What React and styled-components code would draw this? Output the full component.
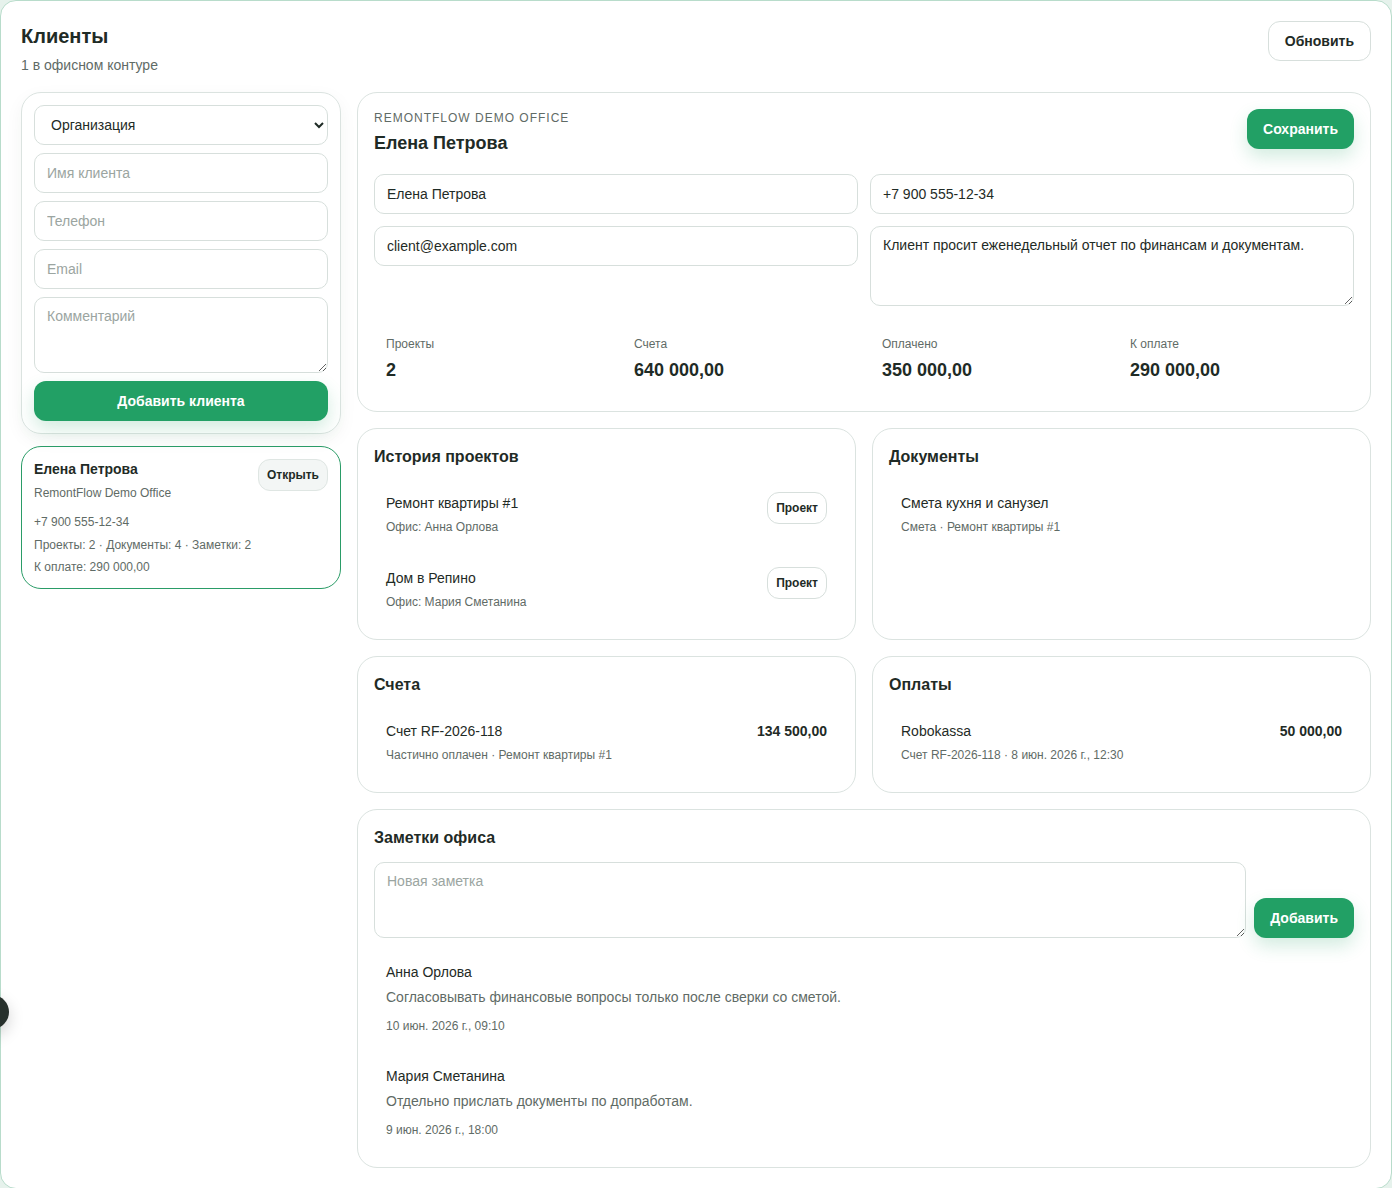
import React from "react";
import styled, { createGlobalStyle } from "styled-components";

const GlobalStyle = createGlobalStyle`
  * { box-sizing: border-box; }
  body {
    margin: 0;
    background: #e6f2ec;
    font-family: "Liberation Sans", Arial, sans-serif;
    color: #1f2b26;
  }
`;

const projects = [
  { title: "Ремонт квартиры #1", sub: "Офис: Анна Орлова" },
  { title: "Дом в Репино", sub: "Офис: Мария Сметанина" },
];

const notes = [
  {
    author: "Анна Орлова",
    text: "Согласовывать финансовые вопросы только после сверки со сметой.",
    date: "10 июн. 2026 г., 09:10",
  },
  {
    author: "Мария Сметанина",
    text: "Отдельно прислать документы по допработам.",
    date: "9 июн. 2026 г., 18:00",
  },
];

const stats = [
  { label: "Проекты", value: "2" },
  { label: "Счета", value: "640 000,00" },
  { label: "Оплачено", value: "350 000,00" },
  { label: "К оплате", value: "290 000,00" },
];

const App = () => {
  return (
    <>
      <GlobalStyle />
      <Panel>
        <Header>
          <div>
            <PageTitle>Клиенты</PageTitle>
            <PageSub>1 в офисном контуре</PageSub>
          </div>
          <GhostButton>Обновить</GhostButton>
        </Header>

        <Layout>
          <Sidebar>
            <FormCard>
              <Select defaultValue="org">
                <option value="org">Организация</option>
              </Select>
              <Input placeholder="Имя клиента" />
              <Input placeholder="Телефон" />
              <Input placeholder="Email" />
              <TextArea placeholder="Комментарий" $h={76} />
              <PrimaryButton $full>Добавить клиента</PrimaryButton>
            </FormCard>

            <ClientCard>
              <ClientTop>
                <ClientName>Елена Петрова</ClientName>
                <SoftButton>Открыть</SoftButton>
              </ClientTop>
              <ClientOffice>RemontFlow Demo Office</ClientOffice>
              <ClientMeta>
                <span>+7 900 555-12-34</span>
                <span>Проекты: 2 · Документы: 4 · Заметки: 2</span>
                <span>К оплате: 290 000,00</span>
              </ClientMeta>
            </ClientCard>
          </Sidebar>

          <Main>
            <Card>
              <CardHead>
                <div>
                  <Eyebrow>RemontFlow Demo Office</Eyebrow>
                  <ClientTitle>Елена Петрова</ClientTitle>
                </div>
                <PrimaryButton>Сохранить</PrimaryButton>
              </CardHead>
              <FieldGrid>
                <FieldCol>
                  <Input defaultValue="Елена Петрова" />
                  <Input defaultValue="client@example.com" />
                </FieldCol>
                <FieldCol>
                  <Input defaultValue="+7 900 555-12-34" />
                  <TextArea
                    $h={80}
                    defaultValue="Клиент просит еженедельный отчет по финансам и документам."
                  />
                </FieldCol>
              </FieldGrid>
              <StatGrid>
                {stats.map((s) => (
                  <Stat key={s.label}>
                    <StatLabel>{s.label}</StatLabel>
                    <StatValue>{s.value}</StatValue>
                  </Stat>
                ))}
              </StatGrid>
            </Card>

            <Pair>
              <Card>
                <SectionTitle>История проектов</SectionTitle>
                <List>
                  {projects.map((p) => (
                    <Item key={p.title}>
                      <div>
                        <ItemTitle>{p.title}</ItemTitle>
                        <ItemSub>{p.sub}</ItemSub>
                      </div>
                      <Badge>Проект</Badge>
                    </Item>
                  ))}
                </List>
              </Card>
              <Card>
                <SectionTitle>Документы</SectionTitle>
                <List>
                  <Item>
                    <div>
                      <ItemTitle>Смета кухня и санузел</ItemTitle>
                      <ItemSub>Смета · Ремонт квартиры #1</ItemSub>
                    </div>
                  </Item>
                </List>
              </Card>
            </Pair>

            <Pair>
              <Card>
                <SectionTitle>Счета</SectionTitle>
                <List>
                  <Item>
                    <div>
                      <ItemTitle>Счет RF-2026-118</ItemTitle>
                      <ItemSub>Частично оплачен · Ремонт квартиры #1</ItemSub>
                    </div>
                    <Amount>134 500,00</Amount>
                  </Item>
                </List>
              </Card>
              <Card>
                <SectionTitle>Оплаты</SectionTitle>
                <List>
                  <Item>
                    <div>
                      <ItemTitle>Robokassa</ItemTitle>
                      <ItemSub>Счет RF-2026-118 · 8 июн. 2026 г., 12:30</ItemSub>
                    </div>
                    <Amount>50 000,00</Amount>
                  </Item>
                </List>
              </Card>
            </Pair>

            <Card>
              <SectionTitle>Заметки офиса</SectionTitle>
              <NoteForm>
                <TextArea placeholder="Новая заметка" $h={76} />
                <PrimaryButton>Добавить</PrimaryButton>
              </NoteForm>
              <NoteList>
                {notes.map((n) => (
                  <Note key={n.author}>
                    <ItemTitle>{n.author}</ItemTitle>
                    <NoteText>{n.text}</NoteText>
                    <NoteDate>{n.date}</NoteDate>
                  </Note>
                ))}
              </NoteList>
            </Card>
          </Main>
        </Layout>
      </Panel>
      <FloatDot />
    </>
  );
};

const Panel = styled.div`
  min-height: 1188px;
  background: #fff;
  border: 1px solid #b8dccb;
  border-radius: 16px;
  padding: 20px;
  display: flex;
  flex-direction: column;
  gap: 17px;
`;

const Header = styled.div`
  display: flex;
  justify-content: space-between;
  align-items: flex-start;
`;

const PageTitle = styled.h1`
  margin: 0;
  font-size: 20px;
  line-height: 30px;
  font-weight: 700;
  color: #1f2b26;
`;

const PageSub = styled.div`
  margin-top: 4px;
  font-size: 14px;
  line-height: 20px;
  color: #5f6b66;
`;

const GhostButton = styled.button`
  height: 40px;
  padding: 0 16px;
  background: #fff;
  border: 1px solid #d7dfdc;
  border-radius: 12px;
  font-family: inherit;
  font-size: 14px;
  font-weight: 700;
  color: #1f2b26;
`;

const Layout = styled.div`
  display: grid;
  grid-template-columns: 320px 1fr;
  gap: 16px;
  align-items: start;
`;

const Sidebar = styled.div`
  display: flex;
  flex-direction: column;
  gap: 12px;
`;

const FormCard = styled.div`
  border: 1px solid #dbe3e0;
  border-radius: 20px;
  padding: 12px;
  display: flex;
  flex-direction: column;
  gap: 8px;
  box-shadow: 0 6px 18px rgba(31, 60, 48, 0.05);
`;

const fieldBase = `
  width: 100%;
  border: 1px solid #d7dfdc;
  border-radius: 10px;
  background: #fff;
  font-family: "Liberation Sans", Arial, sans-serif;
  font-size: 14px;
  color: #1f2b26;
  outline: none;
  &::placeholder { color: #9ba5a1; }
`;

const Input = styled.input`
  ${fieldBase}
  height: 40px;
  padding: 0 12px;
`;

const Select = styled.select`
  ${fieldBase}
  height: 40px;
  padding: 0 8px 0 12px;
`;

const TextArea = styled.textarea`
  ${fieldBase}
  display: block;
  height: ${(p) => p.$h}px;
  padding: 9px 12px;
  resize: vertical;
  line-height: 18px;
`;

const PrimaryButton = styled.button`
  height: 40px;
  padding: 0 16px;
  width: ${(p) => (p.$full ? "100%" : "auto")};
  flex-shrink: 0;
  border: none;
  border-radius: 12px;
  background: #22a065;
  color: #fff;
  font-family: inherit;
  font-size: 14px;
  font-weight: 700;
  box-shadow: 0 8px 18px rgba(34, 160, 101, 0.2);
`;

const ClientCard = styled.div`
  border: 1px solid #2a9c67;
  border-radius: 20px;
  padding: 12px 12px 13px;
`;

const ClientTop = styled.div`
  display: flex;
  justify-content: space-between;
  align-items: flex-start;
`;

const ClientName = styled.div`
  font-size: 14px;
  font-weight: 700;
  line-height: 20px;
`;

const SoftButton = styled.button`
  height: 32px;
  padding: 0 8px;
  background: #f3f6f5;
  border: 1px solid #dfe6e3;
  border-radius: 12px;
  font-family: inherit;
  font-size: 12px;
  font-weight: 700;
  color: #1f2b26;
`;

const ClientOffice = styled.div`
  margin-top: -6px;
  font-size: 12px;
  line-height: 16px;
  color: #5f6b66;
`;

const ClientMeta = styled.div`
  margin-top: 13px;
  display: flex;
  flex-direction: column;
  gap: 6.5px;
  font-size: 12px;
  line-height: 16px;
  color: #5f6b66;
`;

const Main = styled.div`
  display: flex;
  flex-direction: column;
  gap: 16px;
`;

const Card = styled.div`
  border: 1px solid #dbe3e0;
  border-radius: 20px;
  padding: 16px 16px 17px;
  background: #fff;
`;

const CardHead = styled.div`
  display: flex;
  justify-content: space-between;
  align-items: flex-start;
  margin-bottom: 19px;
`;

const Eyebrow = styled.div`
  padding-top: 1px;
  font-size: 12px;
  line-height: 16px;
  letter-spacing: 1px;
  text-transform: uppercase;
  color: #5f6b66;
`;

const ClientTitle = styled.h2`
  margin: 5px 0 0;
  font-size: 18px;
  line-height: 24px;
  font-weight: 700;
`;

const FieldGrid = styled.div`
  display: grid;
  grid-template-columns: 1fr 1fr;
  gap: 12px;
`;

const FieldCol = styled.div`
  display: flex;
  flex-direction: column;
  gap: 12px;
`;

const StatGrid = styled.div`
  margin-top: 18px;
  display: grid;
  grid-template-columns: repeat(4, 1fr);
  gap: 12px;
`;

const Stat = styled.div`
  padding: 12px;
`;

const StatLabel = styled.div`
  font-size: 12px;
  line-height: 16px;
  color: #5f6b66;
`;

const StatValue = styled.div`
  margin-top: 6px;
  font-size: 18px;
  line-height: 24px;
  font-weight: 700;
`;

const Pair = styled.div`
  display: grid;
  grid-template-columns: 1fr 1fr;
  gap: 16px;
`;

const SectionTitle = styled.h3`
  margin: 0;
  font-size: 16px;
  line-height: 24px;
  font-weight: 700;
`;

const List = styled.div`
  margin-top: 13px;
  display: flex;
  flex-direction: column;
  gap: 10px;
`;

const Item = styled.div`
  display: flex;
  justify-content: space-between;
  align-items: center;
  padding: 12px;
`;

const ItemTitle = styled.div`
  font-size: 14px;
  line-height: 18px;
  color: #1f2b26;
`;

const ItemSub = styled.div`
  margin-top: 7px;
  font-size: 12px;
  line-height: 16px;
  color: #5f6b66;
`;

const Badge = styled.span`
  height: 32px;
  display: inline-flex;
  align-items: center;
  padding: 0 8px;
  border: 1px solid #d7dfdc;
  border-radius: 12px;
  font-size: 12px;
  font-weight: 700;
  color: #1f2b26;
  align-self: flex-start;
  margin-top: -2px;
`;

const Amount = styled.div`
  align-self: flex-start;
  font-size: 14px;
  line-height: 18px;
  font-weight: 700;
`;

const NoteForm = styled.div`
  margin-top: 12px;
  display: flex;
  align-items: flex-end;
  gap: 8px;
`;

const NoteList = styled.div`
  margin-top: 13px;
  display: flex;
  flex-direction: column;
  gap: 9px;
`;

const Note = styled.div`
  padding: 12px;
`;

const NoteText = styled.div`
  margin-top: 7px;
  font-size: 14px;
  line-height: 18px;
  color: #5f6b66;
`;

const NoteDate = styled.div`
  margin-top: 12px;
  font-size: 12px;
  line-height: 16px;
  color: #5f6b66;
`;

const FloatDot = styled.div`
  position: absolute;
  left: -25px;
  top: 995px;
  width: 34px;
  height: 34px;
  border-radius: 50%;
  background: #27302c;
  box-shadow: 0 6px 16px rgba(0, 0, 0, 0.18);
`;

export default App;
